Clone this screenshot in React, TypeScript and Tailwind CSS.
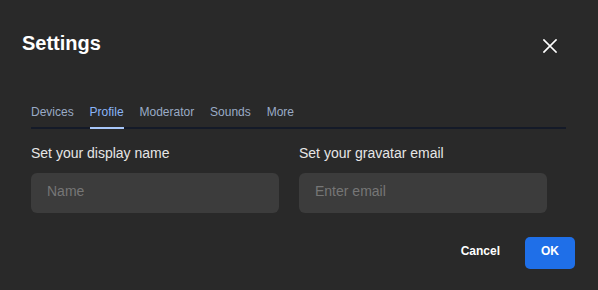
import React from "react";

const tabs = ["Devices", "Profile", "Moderator", "Sounds", "More"];

export default function App() {
  return (
    <div
      className="w-[598px] h-[290px] bg-[#292929] flex flex-col overflow-hidden"
      style={{ fontFamily: '"Liberation Sans", Arial, sans-serif' }}
    >
      <div className="flex items-start justify-between pt-[31px] pl-[22px] pr-[41px]">
        <h1 className="text-[20px] leading-[24px] font-bold text-white">Settings</h1>
        <button className="mt-[8px] w-[14px] h-[14px] text-white" aria-label="Close">
          <svg width="14" height="14" viewBox="0 0 14 14" fill="none" stroke="currentColor" strokeWidth="1.7" strokeLinecap="square">
            <path d="M1 1L13 13M13 1L1 13" />
          </svg>
        </button>
      </div>

      <div className="mt-[49px] ml-[31px] mr-[32px] flex gap-[15.9px] border-b-2 border-[#141a28]">
        {tabs.map((t) => (
          <div
            key={t}
            className={
              t === "Profile"
                ? "text-[12px] leading-[16px] pb-[7px] -mb-[2px] border-b-2 border-[#a8c7fa] text-[#8ab4f8]"
                : "text-[12px] leading-[16px] pb-[7px] text-[#9aabc6]"
            }
          >
            {t}
          </div>
        ))}
      </div>

      <div className="mt-[14px] ml-[31px] w-[516px] grid grid-cols-2 gap-x-[20px]">
        <div className="flex flex-col gap-[10px]">
          <label className="text-[14px] leading-[20px] text-[#e6e6e6]">Set your display name</label>
          <input
            placeholder="Name"
            className="h-[40px] rounded-[6px] bg-[#3c3c3c] px-[16px] pb-[4px] text-[14px] text-white placeholder:text-[#767676] outline-none"
          />
        </div>
        <div className="flex flex-col gap-[10px]">
          <label className="text-[14px] leading-[20px] text-[#e6e6e6]">Set your gravatar email</label>
          <input
            placeholder="Enter email"
            className="h-[40px] rounded-[6px] bg-[#3c3c3c] px-[16px] pb-[4px] text-[14px] text-white placeholder:text-[#767676] outline-none"
          />
        </div>
      </div>

      <div className="mt-[24px] pr-[23px] flex justify-end items-center gap-[25px]">
        <button className="h-[32px] flex items-center pb-[4px] text-[12px] leading-[16px] font-bold text-white">
          Cancel
        </button>
        <button className="w-[50px] h-[32px] rounded-[5px] bg-[#1f6fe8] flex items-center justify-center pb-[4px] text-[12px] leading-[16px] font-bold text-white">
          OK
        </button>
      </div>
    </div>
  );
}
